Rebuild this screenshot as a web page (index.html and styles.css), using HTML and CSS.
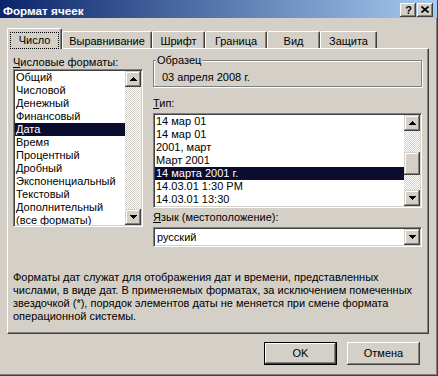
FILE: index.html
```html
<!DOCTYPE html>
<html lang="ru">
<head>
    <meta charset="UTF-8">
    <title>Формат ячеек</title>
    <link rel="stylesheet" href="styles.css">
</head>
<body>
    <div class="window">
        <div class="titlebar">
            <span class="title">Формат ячеек</span>
            <div class="caption-buttons">
                <span class="cap-btn help">?</span>
                <span class="cap-btn">
                    <svg width="8" height="7" viewBox="0 0 8 7"><path d="M0.5 0.5L7.5 6.5M7.5 0.5L0.5 6.5" stroke="#000" stroke-width="1.7"/></svg>
                </span>
            </div>
        </div>

        <div class="body">
            <!-- Tabs -->
            <div class="tabs">
                <div class="tab tab-number active"><span class="focus">Число</span></div>
                <div class="tab tab-align">Выравнивание</div>
                <div class="tab tab-font">Шрифт</div>
                <div class="tab tab-border">Граница</div>
                <div class="tab tab-view">Вид</div>
                <div class="tab tab-protect">Защита</div>
            </div>

            <div class="panel">
                <div class="columns">
                    <!-- Number formats -->
                    <div class="col-left">
                        <div class="label first"><u>Ч</u>исловые форматы:</div>
                        <div class="listbox formats">
                            <ul class="items">
                                <li>Общий</li>
                                <li>Числовой</li>
                                <li>Денежный</li>
                                <li>Финансовый</li>
                                <li class="selected">Дата</li>
                                <li>Время</li>
                                <li>Процентный</li>
                                <li>Дробный</li>
                                <li>Экспоненциальный</li>
                                <li>Текстовый</li>
                                <li>Дополнительный</li>
                                <li>(все форматы)</li>
                            </ul>
                            <div class="scrollbar">
                                <div class="sb-btn"><svg width="7" height="4" viewBox="0 0 7 4"><path d="M3 0h1v1h1v1h1v1h1v1H0V3h1V2h1V1h1z"/></svg></div>
                                <div class="sb-track"></div>
                                <div class="sb-btn"><svg width="7" height="4" viewBox="0 0 7 4"><path d="M0 0h7v1H6v1H5v1H4v1H3V3H2V2H1V1H0z"/></svg></div>
                            </div>
                        </div>
                    </div>

                    <!-- Sample, type, locale -->
                    <div class="col-right">
                        <div class="sample">
                            <div class="sample-title">Образец</div>
                            <div class="sample-value">03 апреля 2008 г.</div>
                        </div>

                        <div class="label type-label"><u>Т</u>ип:</div>
                        <div class="listbox types">
                            <ul class="items">
                                <li>14 мар 01</li>
                                <li>14 мар 01</li>
                                <li>2001, март</li>
                                <li>Март 2001</li>
                                <li class="selected">14 марта 2001 г.</li>
                                <li>14.03.01 1:30 PM</li>
                                <li>14.03.01 13:30</li>
                            </ul>
                            <div class="scrollbar">
                                <div class="sb-btn"><svg width="7" height="4" viewBox="0 0 7 4"><path d="M3 0h1v1h1v1h1v1h1v1H0V3h1V2h1V1h1z"/></svg></div>
                                <div class="sb-track top"></div>
                                <div class="sb-thumb"></div>
                                <div class="sb-track"></div>
                                <div class="sb-btn"><svg width="7" height="4" viewBox="0 0 7 4"><path d="M0 0h7v1H6v1H5v1H4v1H3V3H2V2H1V1H0z"/></svg></div>
                            </div>
                        </div>

                        <div class="label"><u>Я</u>зык (местоположение):</div>
                        <div class="combo">
                            <span class="combo-value">русский</span>
                            <span class="sb-btn"><svg width="7" height="4" viewBox="0 0 7 4"><path d="M0 0h7v1H6v1H5v1H4v1H3V3H2V2H1V1H0z"/></svg></span>
                        </div>
                    </div>
                </div>

                <p class="note">
                    Форматы дат служат для отображения дат и времени, представленных<br>
                    числами, в виде дат. В применяемых форматах, за исключением помеченных<br>
                    звездочкой (*), порядок элементов даты не меняется при смене формата<br>
                    операционной системы.
                </p>
            </div>

            <div class="actions">
                <button class="btn default">OK</button>
                <button class="btn">Отмена</button>
            </div>
        </div>
    </div>
</body>
</html>
```

FILE: styles.css
```css
* { margin: 0; padding: 0; box-sizing: border-box; }
body { background: #d4d0c8; font-family: "Liberation Sans", Arial, sans-serif; font-size: 11px; line-height: 13px; color: #000; }

.window { width: 438px; height: 376px; background: #d4d0c8; border-right: 1px solid #404040; border-bottom: 1px solid #404040; box-shadow: inset -1px -1px #808080; }

/* Title bar */
.titlebar { height: 18px; display: flex; align-items: center; justify-content: space-between; padding: 0 4px 0 3px; background: linear-gradient(to right, #0a246a, #a6caf0); }
.title { color: #fff; font-weight: bold; font-size: 11.7px; padding-top: 2px; }
.caption-buttons { display: flex; gap: 1px; margin-top: 1px; }
.cap-btn { width: 16px; height: 14px; display: flex; align-items: center; justify-content: center; background: #d4d0c8; font-weight: bold; font-size: 11px;
    box-shadow: inset -1px -1px #404040, inset 1px 1px #fff, inset -2px -2px #808080; }
.cap-btn.help { line-height: 14px; padding-left: 1px; }

.body { padding: 10px 0 0 7px; }

/* Tabs */
.tabs { display: flex; align-items: flex-end; height: 20px; position: relative; z-index: 1; }
.tab { height: 17px; padding-top: 3px; text-align: center; background: #d4d0c8; border-top: 1px solid #fff; border-left: 1px solid #fff; border-right: 1px solid #404040; border-radius: 2px 2px 0 0; box-shadow: inset -1px 0 #808080; white-space: nowrap; }
.tab.active { height: 21px; margin-bottom: -1px; padding-top: 4px; text-align: left; }
.tab .focus { display: inline-block; width: 47px; margin-left: 3px; padding: 1px 0; text-align: center; outline: 1px dotted #000; }
.tab-number { width: 55px; }
.tab-align { width: 90px; }
.tab-font { width: 53px; }
.tab-border { width: 62px; }
.tab-view { width: 53px; }
.tab-protect { width: 57px; }

/* Tab panel */
.panel { width: 422px; height: 286px; padding: 4px 0 0 5px; border-top: 1px solid #fff; border-left: 1px solid #fff; border-right: 1px solid #404040; border-bottom: 1px solid #404040; box-shadow: inset -1px -1px #808080; }
.columns { display: grid; grid-template-columns: 130px 269px; column-gap: 10px; align-items: start; }
.label { height: 13px; white-space: nowrap; margin-top: 3px; }
.label.first { margin-top: 3px; }
.label.type-label { margin-top: 10px; }

/* List boxes */
.listbox { display: flex; background: #fff; padding: 1px; border: 1px solid; border-color: #808080 #fff #fff #808080; box-shadow: inset 1px 1px #404040, inset -1px -1px #d4d0c8; }
.formats { height: 158px; }
.types { height: 95px; margin-top: 3px; }
.items { flex: 1; list-style: none; overflow: hidden; }
.items li { height: 13px; padding-left: 1px; white-space: nowrap; }
.items li.selected { background: #0b0c2e; color: #fff; }

.scrollbar { width: 16px; display: flex; flex-direction: column; }
.sb-btn { width: 16px; height: 16px; flex: none; display: flex; align-items: center; justify-content: center; background: #d4d0c8;
    box-shadow: inset -1px -1px #404040, inset 1px 1px #d4d0c8, inset -2px -2px #808080, inset 2px 2px #fff; }
.sb-track { flex: 1; background: conic-gradient(#fff 25%, #d4d0c8 0 50%, #fff 0 75%, #d4d0c8 0) 0 0 / 2px 2px; }
.sb-track.top { flex: none; height: 21px; }
.sb-thumb { height: 23px; flex: none; background: #d4d0c8;
    box-shadow: inset -1px -1px #404040, inset 1px 1px #d4d0c8, inset -2px -2px #808080, inset 2px 2px #fff; }

/* Sample group */
.sample { margin-top: 7px; padding: 0 8px 2px; border: 1px solid #808080; box-shadow: 1px 1px #fff, inset 1px 1px #fff; }
.sample-title { display: table; margin: -7px 0 0 -6px; padding: 0 1px; background: #d4d0c8; }
.sample-value { margin-top: 4px; height: 13px; }

/* Combo */
.combo { display: flex; align-items: center; justify-content: space-between; height: 20px; margin-top: 3px; padding: 1px 1px 1px 3px; background: #fff; border: 1px solid; border-color: #808080 #fff #fff #808080; box-shadow: inset 1px 1px #404040, inset -1px -1px #d4d0c8; }

.note { margin-top: 24px; }

/* Dialog buttons */
.actions { display: flex; justify-content: flex-end; gap: 10px; width: 422px; margin-top: 8px; padding-right: 9px; }
.btn { width: 73px; height: 23px; border: none; background: #d4d0c8; font: inherit; color: #000;
    box-shadow: inset -1px -1px #404040, inset 1px 1px #fff, inset -2px -2px #808080, inset 2px 2px #d4d0c8; }
.btn.default { box-shadow: inset 0 0 0 1px #000, inset -2px -2px #404040, inset 2px 2px #fff, inset -3px -3px #808080; }
```
